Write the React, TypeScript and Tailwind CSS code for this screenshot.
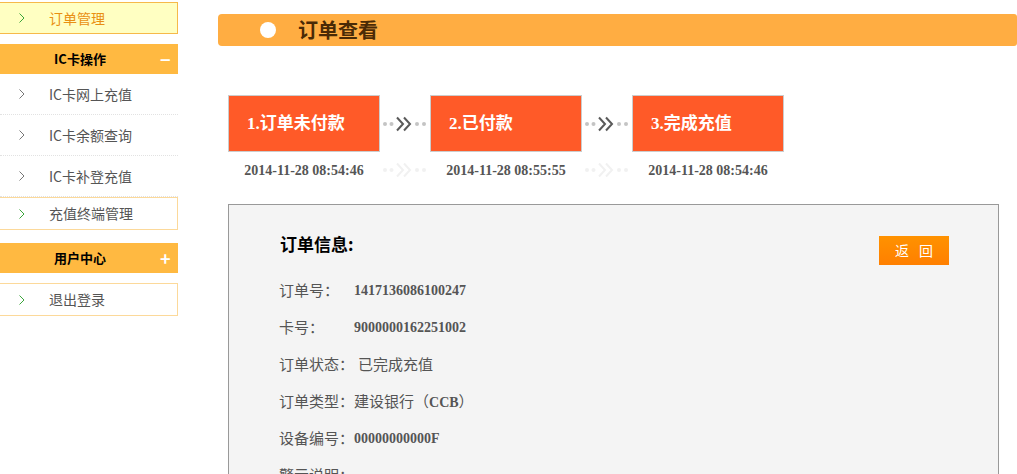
import React from "react";

const cjk = { fontFamily: '"Noto Sans CJK SC", "Liberation Sans", sans-serif' };
const serif = { fontFamily: '"Liberation Serif", "Noto Sans CJK SC", serif' };

function Chevron({ color }: { color: string }) {
  return (
    <svg width="8" height="12" viewBox="0 0 8 12" className="shrink-0">
      <path d="M1.5 1.5 L6 6 L1.5 10.5" fill="none" stroke={color} strokeWidth="1" />
    </svg>
  );
}

function Connector({ faint }: { faint?: boolean }) {
  const dot = faint ? "#f1f1f1" : "#c4c4c4";
  const chev = faint ? "#f1f1f1" : "#5a5a5a";
  return (
    <svg width="50" height="18" viewBox="0 0 50 18" className="shrink-0">
      <circle cx="5" cy="9" r="2" fill={dot} />
      <circle cx="11.5" cy="9" r="2" fill={dot} />
      <path d="M17 2.5 L23 9 L17 15.5" fill="none" stroke={chev} strokeWidth="2" />
      <path d="M24 2.5 L30 9 L24 15.5" fill="none" stroke={chev} strokeWidth="2" />
      <circle cx="37" cy="9" r="2" fill={dot} />
      <circle cx="44" cy="9" r="2" fill={dot} />
    </svg>
  );
}

function SideItem({ label, boxed, green }: { label: string; boxed?: boolean; green?: boolean }) {
  return (
    <div
      className={
        boxed
          ? "flex h-[33px] items-center border border-l-0 border-[#fcd99a] bg-white"
          : "flex h-[41px] items-center border-b border-dotted border-[#e2e2e2]"
      }
    >
      <div className="ml-[18px] w-[31px]">
        <Chevron color={green ? "#3aa53a" : "#777"} />
      </div>
      <span className="text-[14px] text-[#555]" style={cjk}>
        {label}
      </span>
    </div>
  );
}

function SideHeader({ label, sign }: { label: string; sign: string }) {
  return (
    <div className="flex h-[30px] items-center bg-[#ffb941]">
      <span className="w-[160px] text-center text-[13px] font-bold text-black" style={cjk}>
        {label}
      </span>
      <span className="text-[18px] font-bold leading-none text-white" style={cjk}>
        {sign}
      </span>
    </div>
  );
}

function Step({ label }: { label: string }) {
  return (
    <div className="flex h-[57px] w-[152px] shrink-0 items-center border border-[#cccccc] bg-[#ff5a28] pl-[18px]">
      <span className="text-[17px] font-bold text-white" style={serif}>
        {label}
      </span>
    </div>
  );
}

function Row({ label, value, valueSerif, gap }: { label: string; value: React.ReactNode; valueSerif?: boolean; gap?: string }) {
  return (
    <div className="flex h-[37px] items-center">
      <span className={`text-[15px] text-[#555] ${gap ?? ""}`} style={cjk}>
        {label}
      </span>
      <span
        className={valueSerif ? "text-[14px] font-bold text-[#555]" : "text-[15px] text-[#555]"}
        style={valueSerif ? serif : cjk}
      >
        {value}
      </span>
    </div>
  );
}

export default function App() {
  return (
    <div className="flex h-[474px] w-[1017px] overflow-hidden bg-white" style={cjk}>
      <aside className="w-[178px] shrink-0">
        <div className="mt-[2px] flex h-[32px] items-center border border-l-0 border-[#f6b94a] bg-[#ffffc2]">
          <div className="ml-[18px] w-[31px]">
            <Chevron color="#3aa53a" />
          </div>
          <span className="text-[14px] text-[#e98f12]" style={cjk}>
            订单管理
          </span>
        </div>
        <div className="mt-[10px]">
          <SideHeader label="IC卡操作" sign="−" />
        </div>
        <SideItem label="IC卡网上充值" />
        <SideItem label="IC卡余额查询" />
        <SideItem label="IC卡补登充值" />
        <SideItem label="充值终端管理" boxed green />
        <div className="mt-[13px]">
          <SideHeader label="用户中心" sign="+" />
        </div>
        <div className="mt-[10px]">
          <SideItem label="退出登录" boxed green />
        </div>
      </aside>

      <main className="ml-[40px] flex-1">
        <div className="mt-[14px] flex h-[32px] items-center rounded-l-[4px] rounded-r-[3px] bg-[#ffad42]">
          <div className="ml-[42px] h-[16px] w-[16px] rounded-full bg-white" />
          <span className="ml-[22px] text-[20px] font-bold text-[#4a2a06]" style={cjk}>
            订单查看
          </span>
        </div>

        <div className="ml-[10px] mt-[49px] flex items-center">
          <Step label="1.订单未付款" />
          <Connector />
          <Step label="2.已付款" />
          <Connector />
          <Step label="3.完成充值" />
        </div>
        <div className="ml-[10px] mt-[7px] flex h-[22px] items-center">
          <div className="w-[152px] text-center text-[14px] font-bold text-[#555]" style={serif}>
            2014-11-28 08:54:46
          </div>
          <Connector faint />
          <div className="w-[152px] text-center text-[14px] font-bold text-[#555]" style={serif}>
            2014-11-28 08:55:55
          </div>
          <Connector faint />
          <div className="w-[152px] text-center text-[14px] font-bold text-[#555]" style={serif}>
            2014-11-28 08:54:46
          </div>
        </div>

        <div className="ml-[10px] mr-[18px] mt-[23px] h-[300px] border border-[#999] bg-[#f4f4f4] pl-[50px] pr-[49px]">
          <div className="mt-[27px] flex items-start justify-between">
            <span className="ml-[1px] text-[17px] font-bold leading-[24px] text-black" style={cjk}>
              订单信息:
            </span>
            <button className="mt-[4px] flex h-[29px] w-[70px] items-center justify-center bg-gradient-to-b from-[#ff9200] to-[#ff7f00] pl-[10px] text-[14px] tracking-[10px] text-white" style={cjk}>
              返回
            </button>
          </div>
          <div className="mt-[7px]">
            <Row label="订单号：" value="1417136086100247" valueSerif gap="w-[75px]" />
            <Row label="卡号：" value="9000000162251002" valueSerif gap="w-[75px]" />
            <Row label="订单状态：" value="已完成充值" gap="w-[79px]" />
            <Row
              label="订单类型："
              value={
                <>
                  建设银行（
                  <span className="text-[14px] font-bold" style={serif}>
                    CCB
                  </span>
                  ）
                </>
              }
            />
            <Row label="设备编号：" value="00000000000F" valueSerif />
            <Row label="警示说明：" value="" />
          </div>
        </div>
      </main>
    </div>
  );
}
